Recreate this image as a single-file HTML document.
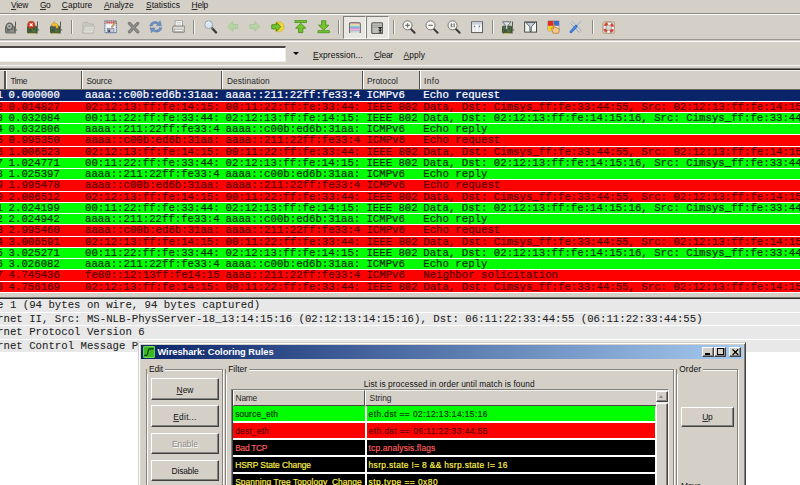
<!DOCTYPE html>
<html><head><meta charset="utf-8"><title>Wireshark</title>
<style>
html,body{margin:0;padding:0;}
body{width:800px;height:485px;overflow:hidden;background:#d4d0c8;position:relative;font-family:"Liberation Sans",sans-serif;font-size:8.4px;color:#111;}
.a{position:absolute;}
.t{position:absolute;white-space:pre;line-height:10px;height:10px;}
u{text-decoration:underline;text-decoration-thickness:0.75px;text-decoration-color:#333;text-underline-offset:0.9px;text-decoration-skip-ink:none;}
.pr{position:absolute;left:0;width:800px;height:10.4px;overflow:hidden;}
.pr span{position:absolute;top:0.1px;white-space:pre;line-height:10.45px;font-family:"Liberation Mono",monospace;font-size:10.70px;-webkit-text-stroke:0.22px;}
.r{background:#ff0000;color:#5a0000;}
.g{background:#00ff00;color:#083008;}
.s{background:#0a246a;color:#ffffff;}
.hd{position:absolute;top:69.8px;height:18.9px;background:#d4d0c8;border-left:1.1px solid #fff;border-top:1px solid #f2f0ea;box-sizing:border-box;}
.hd i{position:absolute;right:0;top:0;bottom:0;width:1.1px;background:#55534e;}
.hd span{position:absolute;left:4.8px;top:5.2px;line-height:10px;white-space:pre;color:#262626;}
.dr{position:absolute;left:0;width:800px;height:12.4px;background:#e8e8e8;overflow:hidden;}
.dr span{position:absolute;top:0;line-height:12.0px;white-space:pre;font-family:"Liberation Mono",monospace;font-size:10.69px;color:#222;-webkit-text-stroke:0.06px;}
.btn{position:absolute;box-sizing:border-box;background:#d4d0c8;border:1.1px solid;border-color:#fff #404040 #404040 #fff;box-shadow:inset -1px -1px 0 #85837d;}
.btn span{position:absolute;left:0;right:0;top:var(--tt,5.6px);line-height:10px;text-align:center;white-space:pre;}
.fr{position:absolute;box-sizing:border-box;border:1px solid #85837d;box-shadow:inset 1px 1px 0 #fbfaf8, 1px 1px 0 #fbfaf8;}
.fl{position:absolute;background:#d4d0c8;line-height:10px;padding:0 1.6px 0 1.8px;white-space:pre;}
.lr{position:absolute;left:233px;width:422.4px;height:15.1px;overflow:hidden;}
.lr span{position:absolute;top:2.9px;line-height:10px;white-space:pre;-webkit-text-stroke:0.18px;}
.lr i{position:absolute;left:132px;top:0;bottom:0;width:2px;background:#fff;}
</style></head><body>

<div class="t" style="left:11.0px;top:-0.3px;font-size:8.4px;letter-spacing:-0.264px;"><u>V</u>iew</div>
<div class="t" style="left:40px;top:-0.3px;font-size:8.4px;letter-spacing:-0.603px;"><u>G</u>o</div>
<div class="t" style="left:61.7px;top:-0.3px;font-size:8.4px;letter-spacing:0.131px;"><u>C</u>apture</div>
<div class="t" style="left:104px;top:-0.3px;font-size:8.4px;letter-spacing:-0.041px;"><u>A</u>nalyze</div>
<div class="t" style="left:146px;top:-0.3px;font-size:8.4px;letter-spacing:0.039px;"><u>S</u>tatistics</div>
<div class="t" style="left:191.6px;top:-0.3px;font-size:8.4px;letter-spacing:-0.219px;"><u>H</u>elp</div>
<div class="a" style="left:0;top:12.5px;width:800px;height:1.1px;background:#8e8c86"></div>
<div class="a" style="left:0;top:13.9px;width:800px;height:1.2px;background:#fbfaf8"></div>
<div class="a" style="left:0;top:39px;width:800px;height:1.1px;background:#9a9892"></div>
<div class="a" style="left:0;top:40.7px;width:800px;height:1.3px;background:#fbfaf8"></div>
<div class="a" style="left:343.3px;top:16.1px;width:22.5px;height:22.6px;background:#e9e7e2;border:1.1px solid;border-color:#807e78 #fbfaf8 #fbfaf8 #807e78;box-sizing:border-box"></div>
<div class="a" style="left:366.1px;top:16.1px;width:22.5px;height:22.6px;background:#e9e7e2;border:1.1px solid;border-color:#807e78 #fbfaf8 #fbfaf8 #807e78;box-sizing:border-box"></div>
<div class="a" style="left:71.4px;top:20px;width:1px;height:14.4px;background:#8a8882"></div><div class="a" style="left:72.4px;top:20px;width:1px;height:14.4px;background:#f4f3ef"></div>
<div class="a" style="left:193.4px;top:20px;width:1px;height:14.4px;background:#8a8882"></div><div class="a" style="left:194.4px;top:20px;width:1px;height:14.4px;background:#f4f3ef"></div>
<div class="a" style="left:338.2px;top:20px;width:1px;height:14.4px;background:#8a8882"></div><div class="a" style="left:339.2px;top:20px;width:1px;height:14.4px;background:#f4f3ef"></div>
<div class="a" style="left:392.6px;top:20px;width:1px;height:14.4px;background:#8a8882"></div><div class="a" style="left:393.6px;top:20px;width:1px;height:14.4px;background:#f4f3ef"></div>
<div class="a" style="left:492.3px;top:20px;width:1px;height:14.4px;background:#8a8882"></div><div class="a" style="left:493.3px;top:20px;width:1px;height:14.4px;background:#f4f3ef"></div>
<div class="a" style="left:591.8px;top:20px;width:1px;height:14.4px;background:#8a8882"></div><div class="a" style="left:592.8px;top:20px;width:1px;height:14.4px;background:#f4f3ef"></div>
<svg class="a" style="left:4.6px;top:20.6px" width="13.4" height="13.4" viewBox="0 0 14 14"><path d="M10.6 0.6 L11.6 0.6 L11.0 13.2 L10.0 13.2 Z" fill="#55554f"/><path d="M11 8.2 L13.2 9.4 L11 10.4 Z" fill="#66665f"/><rect x="0.6" y="5.4" width="9.4" height="7.2" rx="0.8" fill="#8e8e8a" stroke="#585854" stroke-width="0.9"/><rect x="1.8" y="8.8" width="3" height="2.2" fill="#585854" opacity="0.7"/><rect x="6" y="7" width="2.6" height="1.8" fill="#585854" opacity="0.6"/><rect x="2" y="12.5" width="6.5" height="1.3" fill="#a0a09c"/><circle cx="4.6" cy="5.6" r="3.3" fill="#b4b4b0" stroke="#5e5e5a" stroke-width="1.3"/><circle cx="4.6" cy="5.6" r="1.2" fill="#70706c"/></svg>
<svg class="a" style="left:27.1px;top:20.6px" width="13.4" height="13.4" viewBox="0 0 14 14"><path d="M10.6 0.6 L11.6 0.6 L11.0 13.2 L10.0 13.2 Z" fill="#55554f"/><path d="M11 8.2 L13.2 9.4 L11 10.4 Z" fill="#66665f"/><rect x="0.6" y="5.4" width="9.4" height="7.2" rx="0.8" fill="#50703f" stroke="#2e4026" stroke-width="0.9"/><rect x="1.8" y="8.8" width="3" height="2.2" fill="#2e4026" opacity="0.7"/><rect x="6" y="7" width="2.6" height="1.8" fill="#2e4026" opacity="0.6"/><rect x="2" y="12.5" width="6.5" height="1.3" fill="#c8b060"/><circle cx="4.4" cy="3.9" r="3.7" fill="#d83a1c"/><circle cx="4.4" cy="3.9" r="3.7" fill="none" stroke="#a82810" stroke-width="0.6"/><path d="M2.9 2.4 L5.9 5.4 M5.9 2.4 L2.9 5.4" stroke="#fff" stroke-width="1.2"/></svg>
<svg class="a" style="left:49.6px;top:20.6px" width="13.4" height="13.4" viewBox="0 0 14 14"><path d="M10.6 0.6 L11.6 0.6 L11.0 13.2 L10.0 13.2 Z" fill="#55554f"/><path d="M11 8.2 L13.2 9.4 L11 10.4 Z" fill="#66665f"/><rect x="0.6" y="5.4" width="9.4" height="7.2" rx="0.8" fill="#50703f" stroke="#2e4026" stroke-width="0.9"/><rect x="1.8" y="8.8" width="3" height="2.2" fill="#2e4026" opacity="0.7"/><rect x="6" y="7" width="2.6" height="1.8" fill="#2e4026" opacity="0.6"/><rect x="2" y="12.5" width="6.5" height="1.3" fill="#c8b060"/><path d="M1.2 4.2 L4.6 0.4 L4.6 2.2 C7.6 2.0 8.8 4.0 8.4 7.6 L6.2 7.6 C6.4 5.6 6.0 4.8 4.6 4.9 L4.6 6.4 Z" fill="#f0c030" stroke="#b08a18" stroke-width="0.5"/><rect x="2.4" y="6.2" width="3.2" height="1.6" fill="#3a4c8c"/></svg>
<svg class="a" style="left:82px;top:20.6px" width="13.4" height="13.4" viewBox="0 0 14 14"><path d="M0.8 12.4 L0.8 3 L2 1.4 L6 1.4 L7 3 L11.6 3 L11.6 12.4 Z" fill="#c9c8c1" stroke="#a6a59d" stroke-width="0.8" stroke-dasharray="1.2 0.5"/><path d="M1 12.6 L2.6 5.4 L13.4 5.4 L11.8 12.6 Z" fill="#dedcd6" stroke="#a8a79f" stroke-width="0.8" stroke-dasharray="1.2 0.5"/><path d="M3.2 7.6 H12.4 M2.8 9.6 H12" stroke="#c2c1ba" stroke-width="0.6"/></svg>
<svg class="a" style="left:104.2px;top:20.4px" width="13.4" height="13.4" viewBox="0 0 14 14"><rect x="0.8" y="0.8" width="12.2" height="12.4" rx="0.8" fill="#e2e6ec" stroke="#5f7aa8" stroke-width="1.1" stroke-dasharray="1.4 0.5"/><rect x="1.6" y="1.4" width="10.6" height="2.2" fill="#c4524a"/><path d="M3 1.4 V3.6 M5 1.4 V3.6 M7 1.4 V3.6 M9 1.4 V3.6" stroke="#ecc8c4" stroke-width="0.6"/><rect x="2.6" y="4.6" width="8.6" height="3.6" fill="#f6f6f6"/><rect x="3.4" y="9" width="7" height="4" fill="#c2c8d2" stroke="#66769a" stroke-width="0.6"/><rect x="4.4" y="10" width="2" height="2.6" fill="#3c4866"/><path d="M7.4 7.4 L11.6 1.6 L12.8 2.4 L8.8 8.2 Z" fill="#d6b070" stroke="#7a623a" stroke-width="0.4"/></svg>
<svg class="a" style="left:126.8px;top:20.6px" width="13" height="13" viewBox="0 0 14 14"><path d="M2.6 2.6 L11.6 11.6 M11.6 2.6 L2.6 11.6" stroke="#767672" stroke-width="3.4" stroke-linecap="round"/><path d="M2.6 2.6 L11.6 11.6 M11.6 2.6 L2.6 11.6" stroke="#94948f" stroke-width="1.4" stroke-linecap="round"/></svg>
<svg class="a" style="left:149px;top:20.4px" width="13.6" height="13.6" viewBox="0 0 14 14"><g fill="#6f90c2" stroke="#4a6a9e" stroke-width="0.6" stroke-dasharray="1 0.5"><path id="ra" d="M0.8 6.1 C1.2 2 6.4 0.2 9.8 2.6 L11.4 0.8 L13 6 L7.6 5.8 L8.8 4.2 C6.8 3 3.8 3.6 3.4 6.1 Z"/><path d="M0.8 6.1 C1.2 2 6.4 0.2 9.8 2.6 L11.4 0.8 L13 6 L7.6 5.8 L8.8 4.2 C6.8 3 3.8 3.6 3.4 6.1 Z" transform="rotate(180 7 7)"/></g></svg>
<svg class="a" style="left:171.6px;top:20.4px" width="13.6" height="13.6" viewBox="0 0 14 14"><rect x="3.2" y="0.8" width="7.6" height="5.6" fill="#fbfbfb" stroke="#8c8c88" stroke-width="0.7"/><path d="M4.4 2.6 H9.6 M4.4 4.2 H9.6" stroke="#b4b4b0" stroke-width="0.6"/><rect x="0.8" y="6.2" width="12.4" height="6.4" rx="1.2" fill="#d8d8d4" stroke="#74746f" stroke-width="0.9"/><rect x="2.6" y="9.6" width="8.8" height="2" fill="#f6f6f4" stroke="#8c8c88" stroke-width="0.5"/></svg>
<svg class="a" style="left:204px;top:20.2px" width="13.6" height="13.6" viewBox="0 0 14 14"><path d="M7.6 7.6 L12.4 12.8" stroke="#3c3c3c" stroke-width="2.4" stroke-linecap="round"/><path d="M7 7 L9 9" stroke="#8a8a86" stroke-width="1.4"/><circle cx="4.8" cy="4.8" r="4" fill="#d6e6f4" stroke="#9aa2aa" stroke-width="1"/><path d="M2.6 4 A2.6 2.6 0 0 1 5 2.2" stroke="#fff" stroke-width="1" fill="none"/></svg>
<svg class="a" style="left:226.6px;top:20.4px" width="13" height="13" viewBox="0 0 14 14"><path d="M0.8 7 L6.2 1.8 L6.2 4.8 L11.4 4.8 L11.4 9.2 L6.2 9.2 L6.2 12.2 Z" fill="#b5d3a4" stroke="#98bc84" stroke-width="0.8" stroke-dasharray="1.2 0.6"/></svg>
<svg class="a" style="left:249.2px;top:20.4px" width="13" height="13" viewBox="0 0 14 14"><path d="M11.6 7 L6.2 1.8 L6.2 4.8 L1 4.8 L1 9.2 L6.2 9.2 L6.2 12.2 Z" fill="#b5d3a4" stroke="#98bc84" stroke-width="0.8" stroke-dasharray="1.2 0.6"/></svg>
<svg class="a" style="left:271.2px;top:20.4px" width="13.6" height="13.6" viewBox="0 0 14 14"><circle cx="8.2" cy="7" r="5.2" fill="#f2d43c" stroke="#c8a820" stroke-width="0.6"/><path d="M10 7 L5.6 2.4 L5.6 4.9 L0.8 4.9 L0.8 9.1 L5.6 9.1 L5.6 11.6 Z" fill="#74c42c" stroke="#3e8a14" stroke-width="0.9"/></svg>
<svg class="a" style="left:294.2px;top:20.2px" width="13.4" height="13.4" viewBox="0 0 14 14"><rect x="1" y="0.6" width="12" height="2.2" fill="#74c42c" stroke="#3e8a14" stroke-width="0.7"/><path d="M7 3.4 L12.4 8.6 L9.2 8.6 L9.2 13.2 L4.8 13.2 L4.8 8.6 L1.6 8.6 Z" fill="#74c42c" stroke="#3e8a14" stroke-width="0.8"/></svg>
<svg class="a" style="left:316.6px;top:20.4px" width="13.4" height="13.4" viewBox="0 0 14 14"><rect x="1" y="11.2" width="12" height="2.2" fill="#74c42c" stroke="#3e8a14" stroke-width="0.7"/><path d="M7 10.6 L12.4 5.4 L9.2 5.4 L9.2 0.8 L4.8 0.8 L4.8 5.4 L1.6 5.4 Z" fill="#74c42c" stroke="#3e8a14" stroke-width="0.8"/></svg>
<svg class="a" style="left:349.0px;top:21.6px" width="11.9" height="11.9" viewBox="0 0 14 14"><rect x="0.8" y="0.8" width="12.4" height="12.4" rx="1.2" fill="#f4fbfc" stroke="#5c5c58" stroke-width="1.3"/><path d="M1.6 2.3 H12.4" stroke="#dc7c7c" stroke-width="1.3"/><path d="M1.6 3.6 H12.4" stroke="#f2ea78" stroke-width="1.4"/><path d="M1.6 5 H12.4" stroke="#6cd0e8" stroke-width="1.4"/><path d="M1.6 6.3 H12.4" stroke="#86a6c8" stroke-width="1.3"/><path d="M1.6 7.5 H12.4" stroke="#b08cd0" stroke-width="1.2"/><path d="M1.6 9 H12.4" stroke="#f6a8ee" stroke-width="2"/><path d="M1.6 10.7 H12.4" stroke="#6e6e6e" stroke-width="1"/><path d="M1.6 11.7 H12.4" stroke="#d8f4f8" stroke-width="1"/></svg>
<svg class="a" style="left:371.2px;top:21.6px" width="12.3" height="12.3" viewBox="0 0 14 14"><rect x="0.8" y="0.8" width="12.4" height="12.4" rx="1.4" fill="#b2b2b0" stroke="#5c5c58" stroke-width="1.3"/><path d="M1.8 2.6 H12.2 M1.8 4.8 H12.2 M1.8 7 H9 M1.8 9.2 H9 M1.8 11.4 H9" stroke="#cfcfcd" stroke-width="0.9"/><path d="M1.8 3.7 H12.2 M1.8 5.9 H9" stroke="#8e8e8c" stroke-width="0.7"/><path d="M7.8 5.6 L13 5.6 L10.4 8.2 Z M8 8.8 L12.8 8.8 L10.4 11.2 Z" fill="#1c1c1c"/><path d="M10.5 7 V12.4" stroke="#1c1c1c" stroke-width="0.8"/><path d="M8.6 12.2 H12.4" stroke="#333" stroke-width="0.7"/></svg>
<svg class="a" style="left:402.4px;top:20.4px" width="13.8" height="13.8" viewBox="0 0 14 14"><path d="M8.6 8.8 L12.8 13" stroke="#3a3a3a" stroke-width="2" stroke-linecap="round"/><circle cx="5.6" cy="5.4" r="4.6" fill="#f4f4f2" stroke="#74746e" stroke-width="1.0"/><path d="M3.4 5.4 H7.8 M5.6 3.2 V7.6" stroke="#70706a" stroke-width="1.2"/></svg>
<svg class="a" style="left:424.8px;top:20.4px" width="13.8" height="13.8" viewBox="0 0 14 14"><path d="M8.6 8.8 L12.8 13" stroke="#3a3a3a" stroke-width="2" stroke-linecap="round"/><circle cx="5.6" cy="5.4" r="4.6" fill="#f4f4f2" stroke="#74746e" stroke-width="1.0"/><path d="M3.4 5.4 H7.8" stroke="#70706a" stroke-width="1.2"/></svg>
<svg class="a" style="left:447.4px;top:20.4px" width="13.8" height="13.8" viewBox="0 0 14 14"><path d="M8.6 8.8 L12.8 13" stroke="#3a3a3a" stroke-width="2" stroke-linecap="round"/><circle cx="5.6" cy="5.4" r="4.6" fill="#f4f4f2" stroke="#74746e" stroke-width="1.0"/><path d="M4.3 3.4 V7.4 M7.2 3.4 V7.4" stroke="#55554f" stroke-width="1"/><circle cx="5.75" cy="4.4" r="0.4" fill="#55554f"/><circle cx="5.75" cy="6.6" r="0.4" fill="#55554f"/></svg>
<svg class="a" style="left:470.8px;top:20.8px" width="13" height="13" viewBox="0 0 14 14"><rect x="0.7" y="0.9" width="11.6" height="11.6" fill="#fafafa" stroke="#50504c" stroke-width="1"/><rect x="1.2" y="1.4" width="10.6" height="2.4" fill="#c8d4e4"/><path d="M4.4 1.4 V12 M8.4 1.4 V12" stroke="#c4c4c0" stroke-width="0.6"/><path d="M3 4.6 L4.6 5.8 L3 7 Z M9.8 4.6 L8.2 5.8 L9.8 7 Z" fill="#4870b0"/></svg>
<svg class="a" style="left:501.8px;top:20.6px" width="13.4" height="13.4" viewBox="0 0 14 14"><path d="M10.6 0.6 L11.6 0.6 L11.0 13.2 L10.0 13.2 Z" fill="#55554f"/><path d="M11 8.2 L13.2 9.4 L11 10.4 Z" fill="#66665f"/><rect x="0.6" y="5.4" width="9.4" height="7.2" rx="0.8" fill="#50703f" stroke="#2e4026" stroke-width="0.9"/><rect x="1.8" y="8.8" width="3" height="2.2" fill="#2e4026" opacity="0.7"/><rect x="6" y="7" width="2.6" height="1.8" fill="#2e4026" opacity="0.6"/><rect x="2" y="12.5" width="6.5" height="1.3" fill="#c8b060"/><path d="M0.6 0.8 L9.4 0.8 L6 5 L6 9 L4 9 L4 5 Z" fill="#dce4ea" stroke="#4a5258" stroke-width="0.8"/></svg>
<svg class="a" style="left:524.2px;top:20.6px" width="13.4" height="13.4" viewBox="0 0 14 14"><rect x="0.7" y="1" width="12.4" height="10.6" fill="#f4f4f2" stroke="#44443f" stroke-width="1"/><path d="M2 1.6 L11.8 1.6 L7.6 6.2 L7.6 11 L6.2 11 L6.2 6.2 Z" fill="#c6ced6" stroke="#3a4248" stroke-width="0.8"/></svg>
<svg class="a" style="left:546.8px;top:20.4px" width="13.6" height="13.6" viewBox="0 0 14 14"><rect x="0.6" y="0.6" width="12" height="10.6" rx="1" fill="#e8e8e4" stroke="#8a8a86" stroke-width="0.6"/><rect x="1" y="1" width="5.6" height="5" fill="#e02c20"/><rect x="6.8" y="1" width="5.6" height="5" fill="#3c6cc8"/><rect x="1" y="6.2" width="5.6" height="4.8" fill="#f0d020"/><path d="M6.2 13.6 L5.2 10.2 L4.6 8.4 L5.8 8 L6.6 9.4 L6.6 4.8 L8 4.8 L8 7.6 L12 8.4 L12.6 10.8 L12 13.6 Z" fill="#f6c88c" stroke="#b87830" stroke-width="0.8"/></svg>
<svg class="a" style="left:569.4px;top:20.4px" width="13.6" height="13.6" viewBox="0 0 14 14"><path d="M3 3 L11 11.2" stroke="#8f9aa6" stroke-width="3" stroke-linecap="round"/><path d="M3 3 L11 11.2" stroke="#d4dbe2" stroke-width="1.8" stroke-linecap="round"/><path d="M0.6 3.6 L2.2 0.6 L3.4 2.6 Z" fill="#d4d0c8"/><circle cx="1.5" cy="1.7" r="1.1" fill="#d4d0c8"/><circle cx="12.4" cy="12.5" r="1.1" fill="#d4d0c8"/><path d="M7.6 6.4 L12.2 1.2" stroke="#b4bec8" stroke-width="1.5" stroke-linecap="round"/><path d="M2 12.2 L7.4 6.4" stroke="#2f6fd0" stroke-width="2.8" stroke-linecap="round"/><path d="M2.4 11.6 L6.6 7" stroke="#6aa0ec" stroke-width="0.9" stroke-linecap="round"/></svg>
<svg class="a" style="left:601.8px;top:20.6px" width="13.4" height="13.4" viewBox="0 0 14 14"><rect x="0.7" y="0.7" width="12.6" height="12.6" rx="2.6" fill="none" stroke="#c8965a" stroke-width="0.9"/><circle cx="7" cy="7" r="4.3" fill="none" stroke="#f6f6f6" stroke-width="3"/><circle cx="7" cy="7" r="4.3" fill="none" stroke="#e03a2e" stroke-width="3" stroke-dasharray="3.38 3.38" stroke-dashoffset="-1.69"/><circle cx="7" cy="7" r="5.8" fill="none" stroke="#8c8c88" stroke-width="0.6"/><circle cx="7" cy="7" r="2.8" fill="#d8d6d0" stroke="#8c8c88" stroke-width="0.6"/></svg>
<div class="a" style="left:0;top:45.6px;width:286.0px;height:16.8px;background:#fff;border-top:2px solid #4a4844;border-bottom:1.3px solid #eeece6;border-right:1.2px solid #eeece6;box-sizing:border-box"></div>
<div class="a" style="left:293.3px;top:51.9px;width:0;height:0;border-left:3.2px solid transparent;border-right:3.2px solid transparent;border-top:3.8px solid #000"></div>
<div class="t" style="left:313px;top:50.3px;font-size:8.4px;letter-spacing:0.111px;"><u>E</u>xpression...</div>
<div class="t" style="left:374px;top:50.3px;font-size:8.4px;letter-spacing:-0.215px;"><u>C</u>lear</div>
<div class="t" style="left:403.6px;top:50.3px;font-size:8.4px;letter-spacing:0.077px;"><u>A</u>pply</div>
<div class="a" style="left:0;top:65px;width:800px;height:1.3px;background:#f6f5f1"></div>
<div class="a" style="left:0;top:67.5px;width:800px;height:1px;background:#77756f"></div>
<div class="a" style="left:0;top:68.5px;width:800px;height:1.3px;background:#2c2b28"></div>
<div class="hd" style="left:-20px;width:25.5px"><i></i></div>
<div class="hd" style="left:5.5px;width:76.5px"><i></i></div>
<div class="t" style="left:10.4px;top:76.0px;font-size:8.4px;letter-spacing:-0.439px;color:#262626">Time</div>
<div class="hd" style="left:82px;width:140px"><i></i></div>
<div class="t" style="left:86.4px;top:76.0px;font-size:8.4px;letter-spacing:-0.169px;color:#262626">Source</div>
<div class="hd" style="left:222px;width:141px"><i></i></div>
<div class="t" style="left:227px;top:76.0px;font-size:8.4px;letter-spacing:0.070px;color:#262626">Destination</div>
<div class="hd" style="left:363px;width:56.60000000000002px"><i></i></div>
<div class="t" style="left:367px;top:76.0px;font-size:8.4px;letter-spacing:0.023px;color:#262626">Protocol</div>
<div class="hd" style="left:419.6px;width:410.4px"><i></i></div>
<div class="t" style="left:424px;top:76.0px;font-size:8.4px;letter-spacing:0.397px;color:#262626">Info</div>
<div class="a" style="left:0;top:88.6px;width:800px;height:1px;background:#6a6862"></div>
<div class="a" style="left:0;top:89.5px;width:800px;height:1.1px;background:#2c2b28"></div>
<div class="a" style="left:0;top:90.25px;width:800px;height:202.6px;background:#ffffff"></div>
<div class="pr s" style="top:90.25px"><span style="left:-3.4px">1</span><span style="left:8.6px">0.000000</span><span style="left:85px">aaaa::c00b:ed6b:31aa:</span><span style="left:225.6px">aaaa::211:22ff:fe33:4</span><span style="left:366.4px">ICMPv6</span><span style="left:423.3px">Echo request</span></div>
<div class="pr r" style="top:101.50px"><span style="left:-3.4px">2</span><span style="left:8.6px">0.014827</span><span style="left:85px">02:12:13:ff:fe:14:15:</span><span style="left:225.6px">00:11:22:ff:fe:33:44:</span><span style="left:366.4px">IEEE 802</span><span style="left:423.3px">Data, Dst: Cimsys_ff:fe:33:44:55, Src: 02:12:13:ff:fe:14:15</span></div>
<div class="pr g" style="top:112.75px"><span style="left:-3.4px">3</span><span style="left:8.6px">0.032084</span><span style="left:85px">00:11:22:ff:fe:33:44:</span><span style="left:225.6px">02:12:13:ff:fe:14:15:</span><span style="left:366.4px">IEEE 802</span><span style="left:423.3px">Data, Dst: 02:12:13:ff:fe:14:15:16, Src: Cimsys_ff:fe:33:44:55</span></div>
<div class="pr g" style="top:124.00px"><span style="left:-3.4px">4</span><span style="left:8.6px">0.032806</span><span style="left:85px">aaaa::211:22ff:fe33:4</span><span style="left:225.6px">aaaa::c00b:ed6b:31aa:</span><span style="left:366.4px">ICMPv6</span><span style="left:423.3px">Echo reply</span></div>
<div class="pr r" style="top:135.25px"><span style="left:-3.4px">5</span><span style="left:8.6px">0.995350</span><span style="left:85px">aaaa::c00b:ed6b:31aa:</span><span style="left:225.6px">aaaa::211:22ff:fe33:4</span><span style="left:366.4px">ICMPv6</span><span style="left:423.3px">Echo request</span></div>
<div class="pr r" style="top:146.50px"><span style="left:-3.4px">6</span><span style="left:8.6px">1.006523</span><span style="left:85px">02:12:13:ff:fe:14:15:</span><span style="left:225.6px">00:11:22:ff:fe:33:44:</span><span style="left:366.4px">IEEE 802</span><span style="left:423.3px">Data, Dst: Cimsys_ff:fe:33:44:55, Src: 02:12:13:ff:fe:14:15</span></div>
<div class="pr g" style="top:157.75px"><span style="left:-3.4px">7</span><span style="left:8.6px">1.024771</span><span style="left:85px">00:11:22:ff:fe:33:44:</span><span style="left:225.6px">02:12:13:ff:fe:14:15:</span><span style="left:366.4px">IEEE 802</span><span style="left:423.3px">Data, Dst: 02:12:13:ff:fe:14:15:16, Src: Cimsys_ff:fe:33:44:55</span></div>
<div class="pr g" style="top:169.00px"><span style="left:-3.4px">8</span><span style="left:8.6px">1.025397</span><span style="left:85px">aaaa::211:22ff:fe33:4</span><span style="left:225.6px">aaaa::c00b:ed6b:31aa:</span><span style="left:366.4px">ICMPv6</span><span style="left:423.3px">Echo reply</span></div>
<div class="pr r" style="top:180.25px"><span style="left:-3.4px">9</span><span style="left:8.6px">1.995478</span><span style="left:85px">aaaa::c00b:ed6b:31aa:</span><span style="left:225.6px">aaaa::211:22ff:fe33:4</span><span style="left:366.4px">ICMPv6</span><span style="left:423.3px">Echo request</span></div>
<div class="pr r" style="top:191.50px"><span style="left:-3.4px">0</span><span style="left:8.6px">2.006512</span><span style="left:85px">02:12:13:ff:fe:14:15:</span><span style="left:225.6px">00:11:22:ff:fe:33:44:</span><span style="left:366.4px">IEEE 802</span><span style="left:423.3px">Data, Dst: Cimsys_ff:fe:33:44:55, Src: 02:12:13:ff:fe:14:15</span></div>
<div class="pr g" style="top:202.75px"><span style="left:-3.4px">1</span><span style="left:8.6px">2.024199</span><span style="left:85px">00:11:22:ff:fe:33:44:</span><span style="left:225.6px">02:12:13:ff:fe:14:15:</span><span style="left:366.4px">IEEE 802</span><span style="left:423.3px">Data, Dst: 02:12:13:ff:fe:14:15:16, Src: Cimsys_ff:fe:33:44:55</span></div>
<div class="pr g" style="top:214.00px"><span style="left:-3.4px">2</span><span style="left:8.6px">2.024942</span><span style="left:85px">aaaa::211:22ff:fe33:4</span><span style="left:225.6px">aaaa::c00b:ed6b:31aa:</span><span style="left:366.4px">ICMPv6</span><span style="left:423.3px">Echo reply</span></div>
<div class="pr r" style="top:225.25px"><span style="left:-3.4px">3</span><span style="left:8.6px">2.995460</span><span style="left:85px">aaaa::c00b:ed6b:31aa:</span><span style="left:225.6px">aaaa::211:22ff:fe33:4</span><span style="left:366.4px">ICMPv6</span><span style="left:423.3px">Echo request</span></div>
<div class="pr r" style="top:236.50px"><span style="left:-3.4px">4</span><span style="left:8.6px">3.006591</span><span style="left:85px">02:12:13:ff:fe:14:15:</span><span style="left:225.6px">00:11:22:ff:fe:33:44:</span><span style="left:366.4px">IEEE 802</span><span style="left:423.3px">Data, Dst: Cimsys_ff:fe:33:44:55, Src: 02:12:13:ff:fe:14:15</span></div>
<div class="pr g" style="top:247.75px"><span style="left:-3.4px">5</span><span style="left:8.6px">3.025271</span><span style="left:85px">00:11:22:ff:fe:33:44:</span><span style="left:225.6px">02:12:13:ff:fe:14:15:</span><span style="left:366.4px">IEEE 802</span><span style="left:423.3px">Data, Dst: 02:12:13:ff:fe:14:15:16, Src: Cimsys_ff:fe:33:44:55</span></div>
<div class="pr g" style="top:259.00px"><span style="left:-3.4px">6</span><span style="left:8.6px">3.026082</span><span style="left:85px">aaaa::211:22ff:fe33:4</span><span style="left:225.6px">aaaa::c00b:ed6b:31aa:</span><span style="left:366.4px">ICMPv6</span><span style="left:423.3px">Echo reply</span></div>
<div class="pr r" style="top:270.25px"><span style="left:-3.4px">7</span><span style="left:8.6px">4.745436</span><span style="left:85px">fe80::12:13ff:fe14:15</span><span style="left:225.6px">aaaa::211:22ff:fe33:4</span><span style="left:366.4px">ICMPv6</span><span style="left:423.3px">Neighbor solicitation</span></div>
<div class="pr r" style="top:281.50px"><span style="left:-3.4px">8</span><span style="left:8.6px">4.756169</span><span style="left:85px">02:12:13:ff:fe:14:15:</span><span style="left:225.6px">00:11:22:ff:fe:33:44:</span><span style="left:366.4px">IEEE 802</span><span style="left:423.3px">Data, Dst: Cimsys_ff:fe:33:44:55, Src: 02:12:13:ff:fe:14:15</span></div>
<div class="a" style="left:0;top:292.8px;width:800px;height:4.2px;background:#d4d0c8"></div>
<div class="a" style="left:0;top:296.9px;width:800px;height:1px;background:#77756f"></div>
<div class="a" style="left:0;top:297.8px;width:800px;height:1.2px;background:#2c2b28"></div>
<div class="a" style="left:0;top:299px;width:800px;height:187px;background:#ffffff"></div>
<div class="dr" style="top:299.40px"><span style="left:-2.9px">e 1 (94 bytes on wire, 94 bytes captured)</span></div>
<div class="dr" style="top:312.80px"><span style="left:-2.9px">rnet II, Src: MS-NLB-PhysServer-18_13:14:15:16 (02:12:13:14:15:16), Dst: 06:11:22:33:44:55 (06:11:22:33:44:55)</span></div>
<div class="dr" style="top:326.20px"><span style="left:-2.9px">rnet Protocol Version 6</span></div>
<div class="dr" style="top:339.60px"><span style="left:-2.9px">rnet Control Message P</span></div>
<div class="a" style="left:138.4px;top:341.8px;width:607.4px;height:160px;background:#d4d0c8;box-sizing:border-box;border:1px solid;border-color:#d4d0c8 #404040 #404040 #d4d0c8;box-shadow:inset 1.1px 1.1px 0 #fff, inset -1px -1px 0 #808080"></div>
<div class="a" style="left:141.4px;top:344.6px;width:601.6px;height:14.4px;background:linear-gradient(90deg,#0a246a 0%,#a6caf0 100%)"></div>
<svg class="a" style="left:143px;top:345.8px" width="12.2" height="12" viewBox="0 0 12 12"><rect x="0" y="0" width="12" height="12" rx="1" fill="#3cb822"/><rect x="0.5" y="0.5" width="11" height="11" rx="1" fill="none" stroke="#7fe060" stroke-width="0.8"/><path d="M1.2 9.3 H3.4 C5.2 9.3 4.4 2.8 6.4 2.8 H10.8" fill="none" stroke="#10340c" stroke-width="1.2"/></svg>
<div class="t" style="left:157.4px;top:346.6px;font-weight:bold;color:#fff;font-size:9.3px;letter-spacing:-0.02px">Wireshark: Coloring Rules</div>
<div class="a" style="left:701.6px;top:346.8px;width:12.2px;height:10px;background:#d4d0c8;box-sizing:border-box;border:0.9px solid;border-color:#fff #404040 #404040 #fff;box-shadow:inset -0.9px -0.9px 0 #808080"><div class="a" style="left:2.4px;top:5.6px;width:4.6px;height:1.5px;background:#000"></div></div>
<div class="a" style="left:714.0px;top:346.8px;width:12.2px;height:10px;background:#d4d0c8;box-sizing:border-box;border:0.9px solid;border-color:#fff #404040 #404040 #fff;box-shadow:inset -0.9px -0.9px 0 #808080"><div class="a" style="left:1.8px;top:0.6px;width:6.8px;height:6.4px;box-sizing:border-box;border:0.9px solid #000;border-top-width:1.6px"></div></div>
<div class="a" style="left:728.8px;top:346.8px;width:12.2px;height:10px;background:#d4d0c8;box-sizing:border-box;border:0.9px solid;border-color:#fff #404040 #404040 #fff;box-shadow:inset -0.9px -0.9px 0 #808080"><svg class="a" style="left:1.8px;top:0.9px" width="7" height="6.4" viewBox="0 0 7 6.4"><path d="M0.6 0.4 L6.2 6 M6.2 0.4 L0.6 6" stroke="#000" stroke-width="1.3"/></svg></div>
<div class="fr" style="left:145.6px;top:369.1px;width:77.6px;height:140px"></div><div class="fl" style="left:147.2px;top:364.40px;font-size:8.4px;letter-spacing:-0.119px">Edit</div>
<div class="fr" style="left:224.6px;top:369.1px;width:449.6px;height:140px"></div><div class="fl" style="left:226.39999999999998px;top:364.40px;font-size:8.4px;letter-spacing:0.055px">Filter</div>
<div class="fr" style="left:676px;top:369.1px;width:61.799999999999955px;height:140px"></div><div class="fl" style="left:677.4000000000001px;top:364.40px;font-size:8.4px;letter-spacing:0.105px">Order</div>
<div class="btn" style="left:151px;top:378px;width:68px;height:21.69999999999999px;"><span style="font-size:8.4px;letter-spacing:0.065px"><u>N</u>ew</span></div>
<div class="btn" style="left:151px;top:405.3px;width:68px;height:21.30000000000001px;"><span style="font-size:8.4px;letter-spacing:0.303px"><u>E</u>dit...</span></div>
<div class="btn" style="left:151px;top:432.6px;width:68px;height:21.19999999999999px;color:#8a8882;text-shadow:0.8px 0.8px 0 #fff"><span style="font-size:8.4px;letter-spacing:-0.026px">Enable</span></div>
<div class="btn" style="left:151px;top:459.8px;width:68px;height:21.399999999999977px;"><span style="font-size:8.4px;letter-spacing:-0.145px">Disable</span></div>
<div class="btn" style="left:681px;top:407px;width:52.60000000000002px;height:19.5px;--tt:3.9px"><span style="font-size:8.4px;letter-spacing:-0.369px"><u>U</u>p</span></div>
<div class="t" style="left:681px;top:480.8px;font-size:8.4px;letter-spacing:-0.135px;">Move</div>
<div class="t" style="left:363.8px;top:378.7px;font-size:8.4px;letter-spacing:0.071px;">List is processed in order until match is found</div>
<div class="a" style="left:231px;top:389px;width:437.6px;height:110px;background:#fff;box-sizing:border-box;border:1px solid;border-color:#808080 #fff #fff #808080;box-shadow:inset 1.1px 1.3px 0 #404040"></div>
<div class="a" style="left:233px;top:390.4px;width:132px;height:15.3px;background:#d4d0c8;box-sizing:border-box;border-left:1px solid #fff;border-top:1px solid #f2f0ea;border-right:1.1px solid #55534e;border-bottom:1.5px solid #4a4844"></div>
<div class="a" style="left:365px;top:390.4px;width:302px;height:15.3px;background:#d4d0c8;box-sizing:border-box;border-left:1.1px solid #fff;border-top:1px solid #f2f0ea;border-bottom:1.5px solid #4a4844"></div>
<div class="t" style="left:235.6px;top:393.3px;font-size:8.4px;letter-spacing:-0.252px;color:#262626">Name</div>
<div class="t" style="left:369.6px;top:393.3px;font-size:8.4px;letter-spacing:0.009px;color:#262626">String</div>
<div class="lr" style="top:406.00px;background:#00ff00;color:#083008"><i></i><span style="left:2.2px;font-size:8.4px;letter-spacing:0.144px">source_eth</span><span style="left:135.6px;font-size:8.4px;letter-spacing:0.435px">eth.dst == 02:12:13:14:15:16</span></div>
<div class="lr" style="top:423.00px;background:#ff0000;color:#5a0000"><i></i><span style="left:2.2px;font-size:8.4px;letter-spacing:0.222px">dest_eth</span><span style="left:135.6px;font-size:8.4px;letter-spacing:0.457px">eth.dst == 06:11:22:33:44:55</span></div>
<div class="lr" style="top:440.00px;background:#000000;color:#ff5f5f"><i></i><span style="left:2.2px;font-size:8.4px;letter-spacing:-0.276px">Bad TCP</span><span style="left:135.6px;font-size:8.4px;letter-spacing:0.169px">tcp.analysis.flags</span></div>
<div class="lr" style="top:457.00px;background:#000000;color:#fff24a"><i></i><span style="left:2.2px;font-size:8.4px;letter-spacing:-0.053px">HSRP State Change</span><span style="left:135.6px;font-size:8.4px;letter-spacing:0.346px">hsrp.state != 8 &amp;&amp; hsrp.state != 16</span></div>
<div class="lr" style="top:474.00px;background:#000000;color:#fff24a"><i></i><span style="left:2.2px;font-size:8.4px;letter-spacing:0.082px">Spanning Tree Topology  Change</span><span style="left:135.6px;font-size:8.4px;letter-spacing:0.468px">stp.type == 0x80</span></div>
<div class="a" style="left:655.6px;top:390.4px;width:12px;height:100px;background:#ecebe7"></div>
<div class="a" style="left:655.8px;top:390.6px;width:11.8px;height:11.4px;background:#d4d0c8;box-sizing:border-box;border:1px solid;border-color:#fff #404040 #404040 #fff;box-shadow:inset -1px -1px 0 #85837d"></div>
<div class="a" style="left:658.6px;top:394.6px;width:0;height:0;border-left:2.8px solid transparent;border-right:2.8px solid transparent;border-bottom:3px solid #8a8882"></div>
<div class="a" style="left:655.8px;top:402.6px;width:11.8px;height:100px;background:#d4d0c8;box-sizing:border-box;border:1px solid;border-color:#fff #404040 #404040 #fff;box-shadow:inset -1px -1px 0 #85837d"></div>
</body></html>
